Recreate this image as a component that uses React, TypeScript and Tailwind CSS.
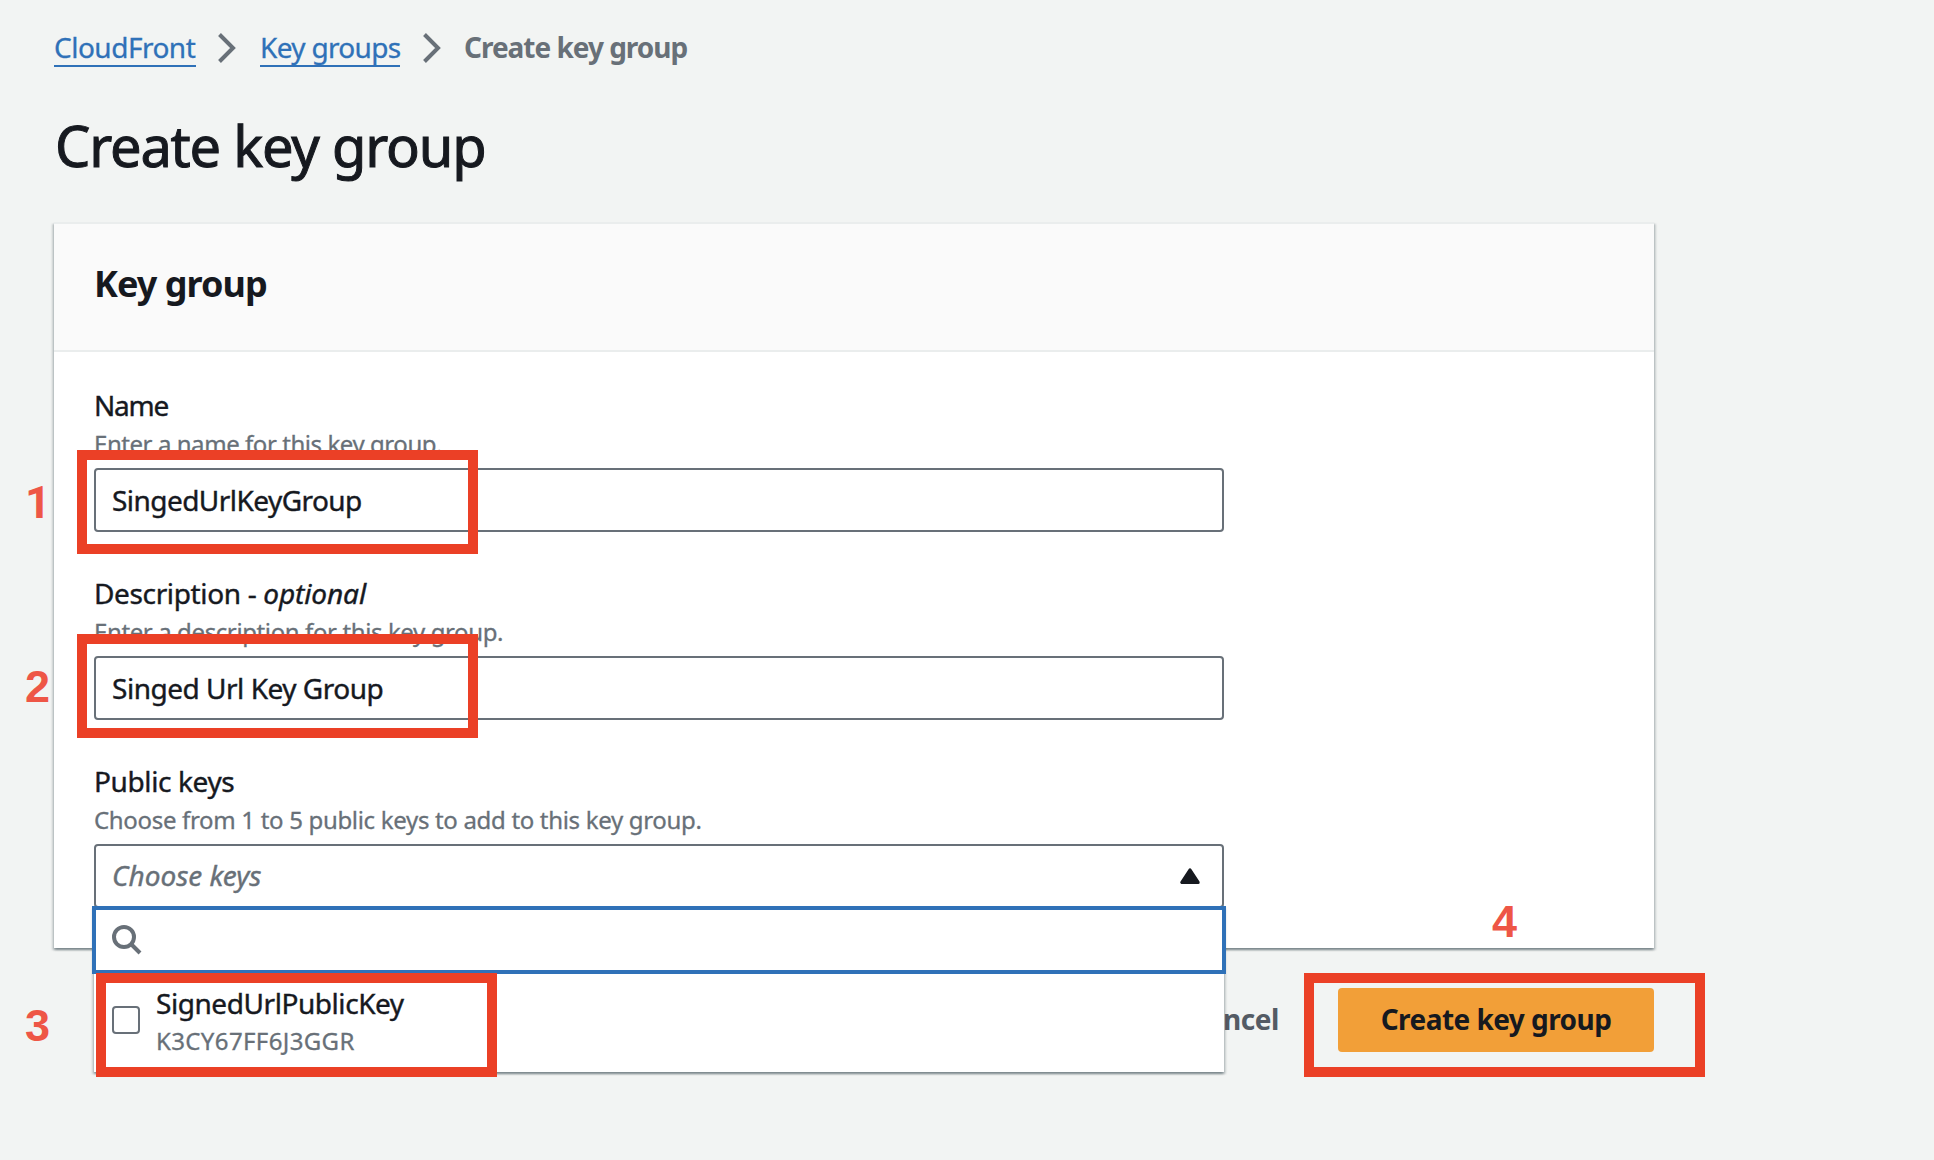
import type { ReactNode } from "react";

const cardShadow =
  "shadow-[0_2px_2px_0_rgba(0,28,36,0.3),2px_2px_2px_0_rgba(0,28,36,0.15),-2px_2px_2px_0_rgba(0,28,36,0.15)]";

function Chevron() {
  return (
    <svg className="h-[30px] w-[18px] shrink-0" viewBox="0 0 18 30" fill="none">
      <path d="M1.5 1.5 15 15 1.5 28.5" stroke="#687078" strokeWidth="4" />
    </svg>
  );
}

function Field({ label, hint, children }: { label: ReactNode; hint: ReactNode; children: ReactNode }) {
  return (
    <div className="w-[1130px]">
      <div className="h-10 whitespace-pre text-[28px] leading-10 [-webkit-text-stroke:0.4px]">{label}</div>
      <div className="mt-px h-9 whitespace-nowrap text-[24px] leading-9 text-[#687078] [-webkit-text-stroke:0.3px]">
        {hint}
      </div>
      <div className="mt-1.5 flex h-16 items-center rounded-[4px] border-2 border-[#687078] bg-white pl-4 text-[28px] leading-10 [-webkit-text-stroke:0.4px]">
        {children}
      </div>
    </div>
  );
}

/* Numbered callouts drawn over the page */
function Callouts() {
  const box = "absolute h-[104px] w-[401px] border-[10px] border-[#eb4026]";
  const digit = "absolute text-[45px] font-bold leading-[50px] text-[#ee5646]";
  const arial = "font-['Liberation_Sans',sans-serif]";
  return (
    <>
      <div className={`${box} left-[77px] top-[450px]`} />
      <div className={`${box} left-[77px] top-[634px]`} />
      <div className={`${box} left-[96px] top-[973px]`} />
      <div className={`${box} left-[1304px] top-[973px]`} />
      <span className={`${digit} left-[25px] top-[478px] font-['Roboto',sans-serif]`}>1</span>
      <span className={`${digit} ${arial} left-[25px] top-[662px]`}>2</span>
      <span className={`${digit} ${arial} left-[25px] top-[1001px]`}>3</span>
      <span className={`${digit} ${arial} left-[1492px] top-[897px]`}>4</span>
    </>
  );
}

function KeyMenu() {
  return (
    <div className={`absolute left-[94px] top-[906px] h-[166px] w-[1130px] bg-white ${cardShadow}`}>
      <div className="-mx-0.5 flex h-[68px] items-center border-4 border-[#2f71b8] bg-white pl-4">
        <svg className="h-[30px] w-[30px]" viewBox="0 0 30 30" fill="none" stroke="#687078" strokeWidth="4">
          <circle cx="12" cy="12" r="10" />
          <path d="M19 19 28 28" />
        </svg>
      </div>
      <div className="flex items-start pl-[18px]">
        <span className="mt-8 size-7 shrink-0 rounded-[4px] border-2 border-[#687078] bg-white" />
        <div className="ml-4 pt-[9px]">
          <div className="h-10 text-[28px] leading-10 tracking-[-0.44px] [-webkit-text-stroke:0.4px]">SignedUrlPublicKey</div>
          <div className="h-9 text-[24px] leading-9 tracking-[0.37px] text-[#687078] [-webkit-text-stroke:0.3px]">
            K3CY67FF6J3GGR
          </div>
        </div>
      </div>
    </div>
  );
}

export default function App() {
  return (
    <main className="relative h-[1160px] w-[1934px] overflow-hidden bg-[#f2f4f3] px-[54px] pt-[27px] font-['Noto_Sans',sans-serif] text-[#16191f]">
      <nav className="flex h-10 items-center text-[28px] leading-10 text-[#687078]">
        <a className="h-10 w-[142px] whitespace-nowrap border-b-2 border-[#2f71b8] tracking-[-0.5px] text-[#2f71b8] [-webkit-text-stroke:0.3px]">
          CloudFront
        </a>
        <span className="ml-[22px] mt-0.5 flex">
          <Chevron />
        </span>
        <a className="ml-6 h-10 w-[140px] whitespace-nowrap border-b-2 border-[#2f71b8] tracking-[-0.68px] text-[#2f71b8] [-webkit-text-stroke:0.3px]">
          Key groups
        </a>
        <span className="ml-[23px] mt-0.5 flex">
          <Chevron />
        </span>
        <span className="ml-[23px] whitespace-nowrap font-bold tracking-[-1.02px]">Create key group</span>
      </nav>

      <h1 className="ml-px mt-[42px] h-[72px] text-[56px] leading-[72px] tracking-[-1.2px] [-webkit-text-stroke:1px]">
        Create key group
      </h1>

      <section className={`mt-[41px] h-[726px] w-[1600px] border-t-2 border-[#eaeded] bg-white ${cardShadow}`}>
        <header className="h-32 border-b-2 border-[#eaeded] bg-[#fafafa] pl-10 pt-[38px]">
          <h2 className="text-[36px] font-bold leading-[44px] tracking-[-0.95px]">Key group</h2>
        </header>
        <div className="flex flex-col gap-[41px] pl-10 pt-[33px]">
          <Field
            label={<span className="tracking-[-1.2px]">Name</span>}
            hint={<span className="tracking-[-0.44px]">Enter a name for this key group.</span>}
          >
            <span className="tracking-[-0.55px]">SingedUrlKeyGroup</span>
          </Field>
          <Field
            label={
              <>
                <span className="tracking-[-0.36px]">Description - </span>
                <i className="tracking-[-0.1px]">optional</i>
              </>
            }
            hint={<span className="tracking-[-0.39px]">Enter a description for this key group.</span>}
          >
            <span className="tracking-[-0.48px]">Singed Url Key Group</span>
          </Field>
          <Field
            label={<span className="tracking-[-0.38px]">Public keys</span>}
            hint={<span className="tracking-[-0.32px]">Choose from 1 to 5 public keys to add to this key group.</span>}
          >
            <i className="-mt-0.5 text-[#687078]">Choose keys</i>
            <svg className="-mt-px ml-auto mr-[22px] h-4 w-5" viewBox="0 0 20 16" fill="#16191f" stroke="#16191f" strokeWidth="3" strokeLinejoin="round">
              <path d="M10 1.8 1.8 14.4 H18.2Z" />
            </svg>
          </Field>
        </div>
      </section>

      <div className="mt-10 flex h-16 w-[1600px] items-center justify-end text-[28px] font-bold leading-10">
        <span className="mb-0.5 mr-[59px] tracking-[-0.4px] text-[#545b64]">Cancel</span>
        <button className="flex h-16 w-[316px] items-center justify-center rounded-[4px] bg-[#f29f38] pb-0.5 tracking-[-0.55px]">
          Create key group
        </button>
      </div>

      <KeyMenu />
      <Callouts />
    </main>
  );
}
